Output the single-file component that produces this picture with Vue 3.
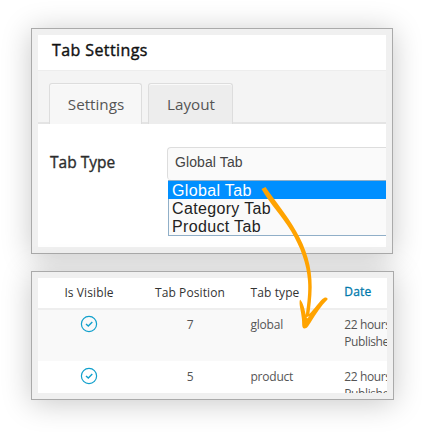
<script setup>
const tabs = ['Settings', 'Layout']
const options = ['Global Tab', 'Category Tab', 'Product Tab']
const rows = [
  { position: 7, type: 'global' },
  { position: 5, type: 'product' },
]
</script>

<template>
  <main class="stage">
    <section class="card settings-card">
      <div class="panel">
        <h1 class="title">Tab Settings</h1>
        <nav class="tabs">
          <button v-for="(tab, i) in tabs" :key="tab" class="tab" :class="{ active: i === 0 }">{{ tab }}</button>
        </nav>
        <div class="field">
          <label class="label">Tab Type</label>
          <div class="select">
            <div class="value">Global Tab</div>
            <ul class="options">
              <li v-for="(option, i) in options" :key="option" class="option" :class="{ chosen: i === 0 }">{{ option }}</li>
            </ul>
          </div>
        </div>
      </div>
    </section>

    <section class="card table-card">
      <div class="panel">
        <div class="row head">
          <span class="visible">Is Visible</span>
          <span class="position">Tab Position</span>
          <span class="type">Tab type</span>
          <span class="date">Date</span>
        </div>
        <div v-for="row in rows" :key="row.type" class="row">
          <span class="visible">
            <svg class="check" viewBox="0 0 18 18">
              <circle cx="9" cy="9" r="7.6" />
              <path d="M6 8.9 L8.3 11 L12.3 7" />
            </svg>
          </span>
          <span class="position">{{ row.position }}</span>
          <span class="type">{{ row.type }}</span>
          <span class="date">22 hours<br />Published</span>
        </div>
      </div>
    </section>

    <svg class="arrow" viewBox="0 0 80 155">
      <path d="M11.5 9 L15.5 7 C25 21 37 35 46 51 C56 68 62 87 61.7 107 C61.5 118 60.4 127 59.3 134 C64 130 70 120 74 118 C76 117 78 118 77.5 119.5 C71 126 66 134 61.5 141 C59 145 57 149 54 148.5 C51.5 148 52.5 143 51.8 138 C51.3 131 48.5 124 50 119.5 C53 122 54.5 129 55.8 135 C57.5 122 58.8 112 58 101 C57 84 50.5 67 41 51 C32 36 20 24 11.5 9 Z" />
      <path class="gap" d="M56.7 137 L59.5 136.3 L57 138.6 Z" />
    </svg>
  </main>
</template>

<style>
body {
  margin: 0;
  background: #fff;
}
</style>

<style scoped>
.stage {
  position: relative;
  box-sizing: border-box;
  width: 422px;
  height: 432px;
  padding: 28px 0 0 31px;
  overflow: hidden;
  font-family: "Open Sans", sans-serif;
  color: #444;
}
.card {
  box-sizing: border-box;
  padding: 6px;
  border: 1px solid #aaa;
  background: #f0f0f0;
  box-shadow: 0 3px 28px rgba(0, 0, 0, 0.22);
}
.settings-card {
  width: 362px;
  height: 226px;
}
.table-card {
  width: 363px;
  height: 129px;
  margin-top: 17px;
}
.panel {
  height: 100%;
  overflow: hidden;
  background: #fff;
}
.title {
  box-sizing: border-box;
  height: 36px;
  margin: 0;
  padding-left: 14px;
  border-bottom: 1px solid #ededed;
  font-size: 16px;
  font-weight: 500;
  letter-spacing: 0.4px;
  line-height: 31px;
  -webkit-text-stroke: 0.4px #111;
  color: #111;
}
.tabs {
  display: flex;
  align-items: flex-end;
  gap: 6px;
  box-sizing: border-box;
  height: 53px;
  padding-left: 11px;
  background: linear-gradient(#e4e4e4, #e4e4e4) bottom / 100% 2px no-repeat #f4f4f4;
}
.tab {
  box-sizing: border-box;
  width: 85px;
  height: 41px;
  padding: 0 0 0 1px;
  border: 1px solid #ddd;
  border-bottom: 0;
  border-radius: 3px 3px 0 0;
  background: #ededed;
  box-shadow: inset 0 1px #fafafa;
  font: 400 15.2px/41px "Open Sans", sans-serif;
  color: #555;
}
.tab.active {
  width: 93px;
  background: #f7f7f7;
}
.field {
  display: flex;
  padding: 23px 0 0 12px;
}
.label {
  width: 117px;
  font-size: 15.5px;
  font-weight: 500;
  line-height: 30px;
  -webkit-text-stroke: 0.35px #2c2c2c;
  color: #2c2c2c;
}
.select {
  flex: 1;
  font-family: "Liberation Sans", Arial, sans-serif;
}
.value {
  box-sizing: border-box;
  height: 33px;
  padding-left: 7px;
  border: 1px solid #ddd;
  border-width: 1px 0 0 1px;
  border-radius: 4px 0 0 4px;
  background: #fafafa;
  font-size: 14px;
  letter-spacing: 0.1px;
  line-height: 29px;
  color: #444;
}
.options {
  box-sizing: border-box;
  height: 56px;
  margin: 0 0 0 1px;
  padding: 0;
  border: 1px solid #90afc8;
  border-width: 1px 0 1px 1px;
  background: #fafafa;
  list-style: none;
}
.option {
  height: 18px;
  padding-left: 3px;
  font-size: 16px;
  letter-spacing: 0.35px;
  line-height: 19px;
  color: #222;
}
.option.chosen {
  margin-left: -1px;
  padding-left: 4px;
  background: #008fff;
  color: #fff;
}
.row {
  display: grid;
  grid-template-columns: 102px 100px 104px 1fr;
  box-sizing: border-box;
  height: 52px;
  padding-top: 6px;
  font-size: 12px;
  letter-spacing: -0.22px;
  line-height: 17px;
  color: #555;
  white-space: nowrap;
}
.row:nth-child(2) {
  height: 51px;
  background: #f9f9f9;
}
.row:nth-child(3) {
  padding-top: 7px;
}
.head {
  height: 32px;
  border-bottom: 2px solid #eee;
  letter-spacing: 0.1px;
  color: #333;
}
.visible,
.position {
  text-align: center;
}
.type {
  padding-left: 10.5px;
}
.date {
  padding-left: 0.3px;
  letter-spacing: -0.4px;
}
.head .date {
  margin-top: -1px;
  letter-spacing: 0.2px;
  -webkit-text-stroke: 0.3px #0079ab;
  color: #0079ab;
}
.check {
  display: block;
  width: 18px;
  height: 18px;
  margin: -1px auto 0;
  fill: none;
  stroke: #11a0cc;
  stroke-width: 1.2;
}
.check path {
  stroke-width: 1.4;
}
.arrow {
  position: absolute;
  left: 250px;
  top: 180px;
  width: 80px;
  height: 155px;
  fill: #ffa300;
}
.gap {
  fill: #fff;
}
</style>
